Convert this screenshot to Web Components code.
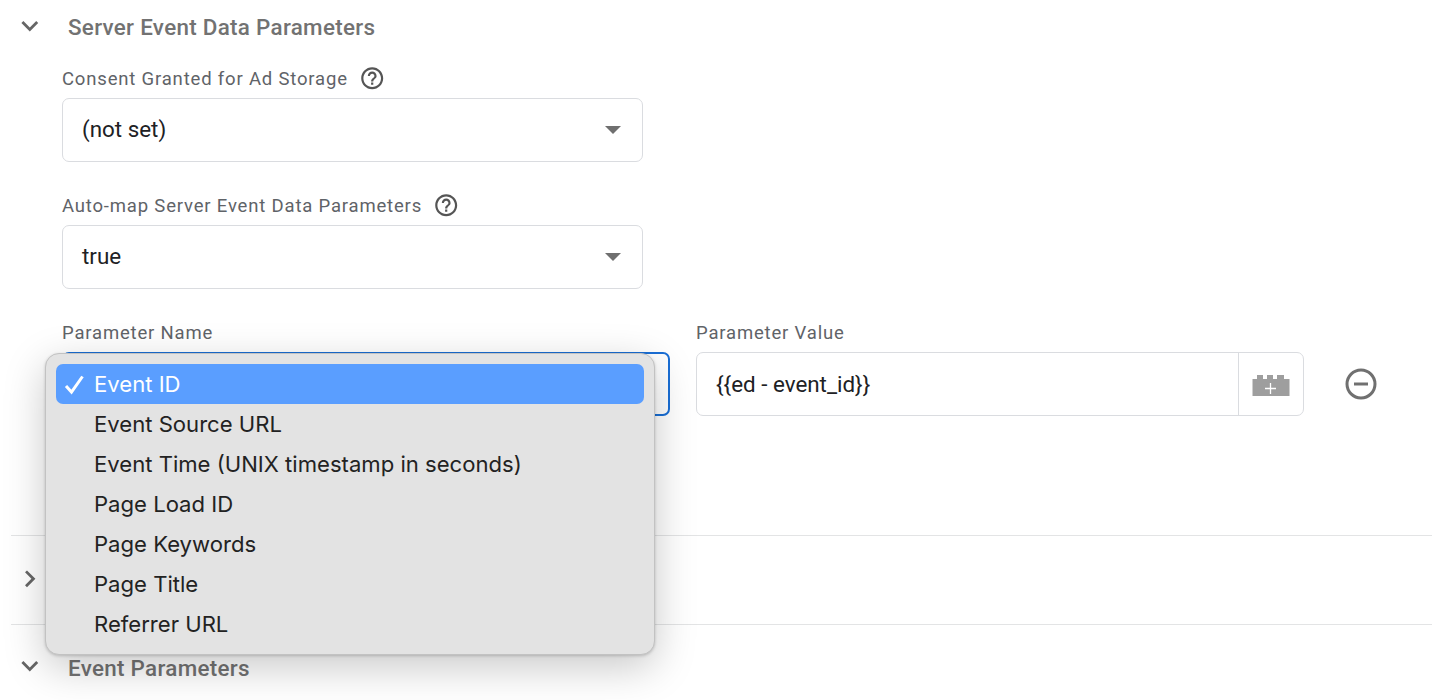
<!DOCTYPE html>
<html><head><meta charset="utf-8">
<style>
html,body{margin:0;padding:0;background:#fff;height:700px;overflow:hidden;font-family:Roboto,sans-serif}
</style></head><body>
<template id="t-section"><style>
:host{display:block;margin-left:11px}
:host([divided]){border-top:1px solid #e3e4e5}
.h{display:flex;align-items:center;height:var(--hh,54px)}
.c{width:34px;margin-left:2px;margin-right:21px;margin-top:-3px}
.t{font:500 22.4px/28px Roboto,sans-serif;color:#727272;letter-spacing:.3px}
svg{display:block}
.b{padding-left:51px;padding-top:10px}
.b:not(.on){display:none}
</style><div class="h"><div class="c"><svg width="33.600" height="33.600" viewBox="0 0 24 24" fill="#666"><path id="p" d=""/></svg></div><div class="t"><slot name="title"></slot></div></div><div class="b" id="b"><slot></slot></div></template>

<template id="t-field"><style>
:host{display:block;width:581px;margin-bottom:29px}
.l{display:flex;align-items:center;gap:11px;height:29px;margin-bottom:5px;font:400 18.500px/24px Roboto,sans-serif;color:#5f6368;letter-spacing:.82px}
.i{box-sizing:border-box;height:64px;border:1px solid #dadce0;border-radius:7px;display:flex;align-items:center;justify-content:space-between;padding:0 21px 2px 19px;font:400 22.400px/28px Roboto,sans-serif;color:#202124;background:#fff}
.a{width:0;height:0;border-left:8px solid transparent;border-right:8px solid transparent;border-top:8px solid #6f6f6f;margin-top:2px}
svg{display:block}
</style><div class="l"><span id="lt"></span><svg id="q" width="26.400" height="26.400" viewBox="0 0 24 24" fill="#555"><path d="M11 18h2v-2h-2v2zm1-16C6.480 2 2 6.480 2 12s4.480 10 10 10 10-4.480 10-10S17.520 2 12 2zm0 18c-4.410 0-8-3.590-8-8s3.590-8 8-8 8 3.590 8 8-3.590 8-8 8zm0-14c-2.210 0-4 1.790-4 4h2c0-1.100.9-2 2-2s2 .9 2 2c0 2-3 1.750-3 5h2c0-2.250 3-2.500 3-5 0-2.210-1.790-4-4-4z"/></svg></div><div class="i"><span><slot></slot></span><div class="a"></div></div></template>

<template id="t-param"><style>
:host{display:flex;align-items:flex-start;height:217px}
.l{height:29px;margin-bottom:5px;font:400 18.500px/24px Roboto,sans-serif;color:#5f6368;letter-spacing:.82px;display:flex;align-items:center}
.n{width:608px;box-sizing:border-box;height:64px;border:2px solid #1a6fd6;border-radius:7px;background:#fff}
.v{margin-left:26px;width:608px;box-sizing:border-box;height:64px;border:1px solid #dadce0;border-radius:7px;display:flex;align-items:stretch;font:400 22.400px/28px Roboto,sans-serif;color:#202124}
.tx{flex:1;display:flex;align-items:center;padding-left:19px}
.ad{width:64px;border-left:1px solid #dadce0;display:flex;align-items:center;justify-content:center}
.ad svg{margin-top:4px}
.m{margin-left:39px;margin-top:48px;width:36px;height:36px}
svg{display:block}
</style><div><div class="l">Parameter Name</div><div class="n"></div></div><div><div class="l" style="margin-left:26px">Parameter Value</div><div class="v"><div class="tx">{{ed - event_id}}</div><div class="ad"><svg width="38" height="22" viewBox="0 0 38 22"><path fill="#9e9e9e" d="M.5 4H5V0h6v4h4V0h6v4h4V0h7v4h5.500v17H.5z"/><path d="M18.500 8v11M13 13.500h11" stroke="#fff" stroke-width="1.300" fill="none"/></svg></div></div></div><svg class="m" viewBox="0 0 36 36" fill="none"><circle cx="18" cy="18" r="14" stroke="#707070" stroke-width="3"/><path d="M11 18h14" stroke="#707070" stroke-width="3"/></svg></template>

<template id="t-menu"><style>
:host{position:absolute;left:45px;top:353px;width:610px;height:302px;box-sizing:border-box;background:#e3e3e3;border:1px solid #c2c2c2;border-radius:14px;box-shadow:0 12px 42px rgba(0,0,0,.22),0 1px 3px rgba(0,0,0,.18);padding:10px;font:400 22.100px/40px Inter,sans-serif;color:#222;z-index:5}
</style><slot></slot></template>

<template id="t-item"><style>
:host{display:flex;align-items:center;height:40px;border-radius:7px;padding-left:38px;position:relative;white-space:nowrap}
:host([sel]){background:#5a9eff;color:#fff}
svg{position:absolute;left:7px;top:11px;display:none}
:host([sel]) svg{display:block}
</style><svg width="22" height="20" viewBox="0 0 22 20" fill="none"><path d="M3 11l5.500 6L19.500 1.500" stroke="#fff" stroke-width="3"/></svg><slot></slot></template>

<gt-page-section id="s1" open style="--hh:54px">
  <span slot="title">Server Event Data Parameters</span>
  <gt-field label="Consent Granted for Ad Storage">(not set)</gt-field>
  <gt-field label="Auto-map Server Event Data Parameters">true</gt-field>
  <gt-param></gt-param>
</gt-page-section>
<gt-page-section divided style="--hh:88px"></gt-page-section>
<gt-page-section divided open style="--hh:85px"><span slot="title">Event Parameters</span></gt-page-section>
<gt-menu>
  <gt-item sel>Event ID</gt-item>
  <gt-item>Event Source URL</gt-item>
  <gt-item>Event Time (UNIX timestamp in seconds)</gt-item>
  <gt-item>Page Load ID</gt-item>
  <gt-item>Page Keywords</gt-item>
  <gt-item>Page Title</gt-item>
  <gt-item>Referrer URL</gt-item>
</gt-menu>
<script>
const DOWN='M7.410 8.590 12 13.170l4.590-4.580L18 10l-6 6-6-6z';
const RIGHT='M8.590 16.590 13.170 12 8.590 7.410 10 6l6 6-6 6z';
function mk(name,id,init){customElements.define(name,class extends HTMLElement{constructor(){super();this.attachShadow({mode:'open'}).appendChild(document.getElementById(id).content.cloneNode(true));}connectedCallback(){init&&init(this)}});}
mk('gt-page-section','t-section',e=>{e.shadowRoot.getElementById('p').setAttribute('d',e.hasAttribute('open')?DOWN:RIGHT);if(e.children.length>1)e.shadowRoot.getElementById('b').classList.add('on')});
mk('gt-field','t-field',e=>{e.shadowRoot.getElementById('lt').textContent=e.getAttribute('label')});
mk('gt-param','t-param');
mk('gt-menu','t-menu');
mk('gt-item','t-item');
</script>
</body></html>
